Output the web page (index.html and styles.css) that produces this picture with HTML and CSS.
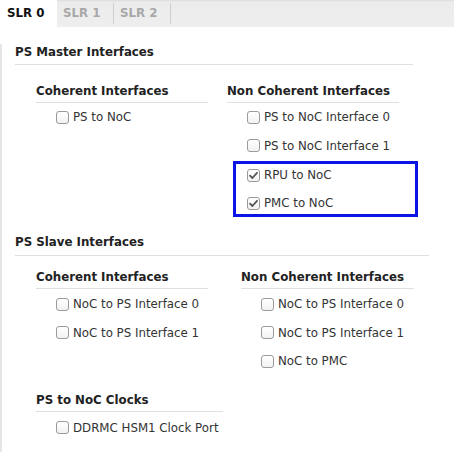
FILE: index.html
```html
<!DOCTYPE html>
<html>
<head>
<meta charset="utf-8">
<link rel="stylesheet" href="styles.css">
</head>
<body>
<div class="tabs">
  <div class="tab active">SLR 0</div>
  <div class="tab">SLR 1</div>
  <div class="tab">SLR 2</div>
</div>
<div class="panel">
  <div class="section master">
    <div class="sec-title">PS Master Interfaces</div>
    <div class="cols">
      <div class="col col-left">
        <div class="sub-title">Coherent Interfaces</div>
        <label class="row"><span class="cb"></span>PS to NoC</label>
      </div>
      <div class="col col-right">
        <div class="sub-title">Non Coherent Interfaces</div>
        <label class="row"><span class="cb"></span>PS to NoC Interface 0</label>
        <label class="row"><span class="cb"></span>PS to NoC Interface 1</label>
        <div class="highlight">
          <label class="row"><span class="cb checked"><svg viewBox="0 0 13 13" width="13" height="13"><path d="M3 6.6 L5.4 9 L10 3.8" fill="none" stroke="#555" stroke-width="1.8" stroke-linecap="round" stroke-linejoin="round"/></svg></span>RPU to NoC</label>
          <label class="row"><span class="cb checked"><svg viewBox="0 0 13 13" width="13" height="13"><path d="M3 6.6 L5.4 9 L10 3.8" fill="none" stroke="#555" stroke-width="1.8" stroke-linecap="round" stroke-linejoin="round"/></svg></span>PMC to NoC</label>
        </div>
      </div>
    </div>
  </div>
  <div class="section slave">
    <div class="sec-title">PS Slave Interfaces</div>
    <div class="cols">
      <div class="col col-left">
        <div class="sub-title">Coherent Interfaces</div>
        <label class="row"><span class="cb"></span>NoC to PS Interface 0</label>
        <label class="row"><span class="cb"></span>NoC to PS Interface 1</label>
      </div>
      <div class="col col-right2">
        <div class="sub-title">Non Coherent Interfaces</div>
        <label class="row"><span class="cb"></span>NoC to PS Interface 0</label>
        <label class="row"><span class="cb"></span>NoC to PS Interface 1</label>
        <label class="row"><span class="cb"></span>NoC to PMC</label>
      </div>
    </div>
    <div class="col col-left clocks">
      <div class="sub-title clocks-title">PS to NoC Clocks</div>
      <label class="row"><span class="cb"></span>DDRMC HSM1 Clock Port</label>
    </div>
  </div>
</div>
</body>
</html>
```
FILE: styles.css
```css
html, body {
  margin: 0;
  padding: 0;
  background: #ffffff;
}
body {
  font-family: "DejaVu Sans", sans-serif;
  font-size: 11.8px;
  color: #222;
  width: 454px;
  height: 452px;
  overflow: hidden;
}
.tabs {
  display: flex;
  height: 27px;
  background: linear-gradient(#dcdcdc 0, #ececec 2px, #eeeeee 100%);
}
.tab {
  box-sizing: border-box;
  width: 57px;
  padding-left: 6px;
  line-height: 27px;
  font-weight: bold;
  font-size: 11.8px;
  color: #a8a8a8;
  position: relative;
}
.tab + .tab::after {
  content: "";
  position: absolute;
  right: 0;
  top: 3px;
  bottom: 3px;
  width: 1px;
  background: #cfcfcf;
}
.tab.active {
  background: #ffffff;
  color: #111;
  padding-left: 7px;
}
.panel {
  border-left: 2px solid #e6e6e6;
  height: 425px;
  box-sizing: border-box;
}
.section {
  padding-left: 13px;
}
.sec-title {
  font-weight: bold;
  color: #222;
  line-height: 16px;
  padding-bottom: 4px;
  border-bottom: 1px solid #e0e0e0;
}
.master .sec-title {
  margin-top: 17px;
  width: 398px;
}
.slave .sec-title {
  margin-top: 17px;
  width: 414px;
  padding-bottom: 5px;
}
.cols {
  display: flex;
}
.col-left {
  margin-left: 21px;
  width: 172px;
}
.col-right {
  margin-left: 19px;
  width: 172px;
}
.col-right2 {
  margin-left: 33px;
  width: 173px;
}
.sub-title {
  font-weight: bold;
  color: #222;
  line-height: 16px;
  padding-bottom: 3px;
  border-bottom: 1px solid #e0e0e0;
  margin-top: 18px;
  margin-bottom: 0;
}
.slave .sub-title {
  margin-top: 13px;
  margin-bottom: 1px;
}
.clocks {
  margin-top: 2px;
}
.slave .clocks-title {
  margin-top: 16px;
  width: 187px;
  margin-bottom: 2px;
}
.row {
  display: flex;
  align-items: center;
  height: 28.5px;
  padding-left: 20px;
  color: #333;
  white-space: nowrap;
}
.cb {
  box-sizing: border-box;
  width: 13px;
  height: 13px;
  border: 1px solid #9a9a9a;
  border-radius: 3px;
  background: linear-gradient(#ffffff, #f2f2f2);
  margin-right: 4px;
  flex: none;
  display: flex;
  align-items: center;
  justify-content: center;
}
.cb svg {
  display: block;
  margin: -1px;
}
.highlight {
  outline: 3px solid #0a14e6;
  outline-offset: -3px;
  margin-left: 6px;
  width: 185px;
  margin-top: 1px;
}
.highlight .row {
  padding-left: 14px;
  height: 28px;
}
```
